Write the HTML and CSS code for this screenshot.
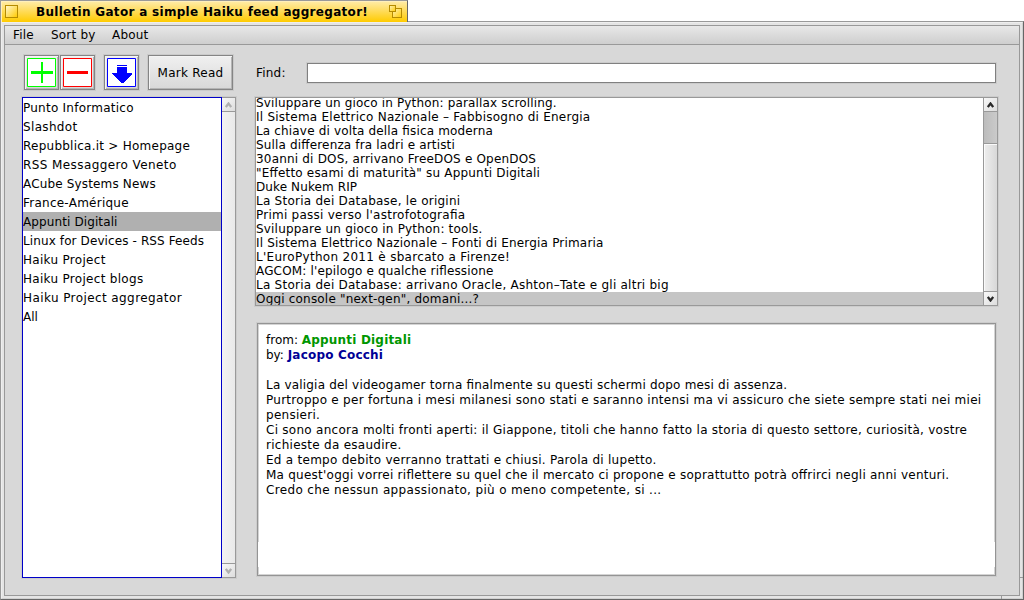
FILE: index.html
```html
<!DOCTYPE html>
<html lang="it">
<head>
<meta charset="utf-8">
<title>Bulletin Gator</title>
<link rel="stylesheet" href="styles.css">
</head>
<body>
<header class="tab">
  <span class="close"></span>
  <h1 class="title">Bulletin Gator a simple Haiku feed aggregator!</h1>
  <svg class="zoom" width="13" height="13" viewBox="0 0 13 13"><defs><linearGradient id="g" x2="1" y2="1"><stop offset="0" stop-color="#fff3b8"/><stop offset="1" stop-color="#ffcb05"/></linearGradient></defs><rect x="3.5" y="3.5" width="9" height="9" fill="url(#g)" stroke="#b58b00"/><rect x=".5" y=".5" width="6" height="6" fill="url(#g)" stroke="#b58b00"/></svg>
</header>
<div class="frame">
  <div class="window">
    <nav class="menu"><span class="m-file">File</span><span class="m-sort">Sort by</span><span>About</span></nav>
    <main class="content">
      <section class="left">
        <div class="toolbar">
          <button class="btn"><svg width="29" height="29" viewBox="0 0 29 29"><path fill="#fff" stroke="#0f0" d="M.5.5h28v28H.5z"/><path fill="#0f0" d="M4 13h22v3H4zM14 4h2v21h-2z"/></svg></button>
          <button class="btn minus"><svg width="29" height="29" viewBox="0 0 29 29"><path fill="#fff" stroke="#f00" d="M.5.5h28v28H.5z"/><path fill="#f00" d="M4 13h21v3H4z"/></svg></button>
          <button class="btn down"><svg width="29" height="29" viewBox="0 0 29 29"><path fill="#fff" stroke="#00f" d="M.5.5h28v28H.5z"/><path fill="#00f" shape-rendering="crispEdges" d="M10 7h10v1H10zM10 9h10v6h5v1l-9 9h-2l-9-9v-1h5z"/></svg></button>
          <button class="btn mark">Mark Read</button>
        </div>
        <div class="feedbox">
          <ul class="feeds">
            <li class="w5">Punto Informatico</li><li class="w7">Slashdot</li><li class="w5">Repubblica.it &gt; Homepage</li><li class="w8">RSS Messaggero Veneto</li><li class="w3">ACube Systems News</li><li class="w5">France-Amérique</li><li class="on w2">Appunti Digitali</li><li class="w2">Linux for Devices - RSS Feeds</li><li class="w6">Haiku Project</li><li class="w6">Haiku Project blogs</li><li class="w8">Haiku Project aggregator</li><li>All</li>
          </ul>
          <div class="bar off">
            <span class="arrow up"><svg width="7" height="6" viewBox="0 0 7 6"><path d="M.8 5L3.5 1.5 6.2 5"/></svg></span>
            <span class="track"></span>
            <span class="arrow dn"><svg width="7" height="6" viewBox="0 0 7 6"><path d="M.8 1L3.5 4.5 6.2 1"/></svg></span>
          </div>
        </div>
      </section>
      <section class="right">
        <div class="find"><label for="q">Find:</label><input id="q" class="query"></div>
        <div class="itembox">
          <ul class="items">
            <li class="w3">Sviluppare un gioco in Python: parallax scrolling.</li><li class="w5">Il Sistema Elettrico Nazionale – Fabbisogno di Energia</li><li class="w3">La chiave di volta della fisica moderna</li><li class="w3">Sulla differenza fra ladri e artisti</li><li class="w4">30anni di DOS, arrivano FreeDOS e OpenDOS</li><li class="w4">"Effetto esami di maturità" su Appunti Digitali</li><li class="w2">Duke Nukem RIP</li><li class="w5">La Storia dei Database, le origini</li><li class="w5">Primi passi verso l'astrofotografia</li><li class="w4">Sviluppare un gioco in Python: tools.</li><li class="w4">Il Sistema Elettrico Nazionale – Fonti di Energia Primaria</li><li class="w6">L'EuroPython 2011 è sbarcato a Firenze!</li><li class="w3">AGCOM: l'epilogo e qualche riflessione</li><li class="w5">La Storia dei Database: arrivano Oracle, Ashton–Tate e gli altri big</li><li class="sel w4">Oggi console "next-gen", domani...?</li>
          </ul>
          <div class="bar">
            <span class="arrow up"><svg width="7" height="6" viewBox="0 0 7 6"><path d="M.8 5L3.5 1.5 6.2 5"/></svg></span>
            <span class="gap"></span>
            <span class="track thumb"></span>
            <span class="arrow dn"><svg width="7" height="6" viewBox="0 0 7 6"><path d="M.8 1L3.5 4.5 6.2 1"/></svg></span>
          </div>
        </div>
        <article class="article">
          <p>from: <b class="src w4">Appunti Digitali</b></p>
          <p>by: <b class="author w4">Jacopo Cocchi</b></p>
          <p class="first w4">La valigia del videogamer torna finalmente su questi schermi dopo mesi di assenza.</p>
          <p class="w55">Purtroppo e per fortuna i mesi milanesi sono stati e saranno intensi ma vi assicuro che siete sempre stati nei miei<br>pensieri.</p>
          <p class="w55">Ci sono ancora molti fronti aperti: il Giappone, titoli che hanno fatto la storia di questo settore, curiosità, vostre<br>richieste da esaudire.</p>
          <p class="w55">Ed a tempo debito verranno trattati e chiusi. Parola di lupetto.</p>
          <p class="w5">Ma quest'oggi vorrei riflettere su quel che il mercato ci propone e soprattutto potrà offrirci negli anni venturi.</p>
          <p class="w7">Credo che nessun appassionato, più o meno competente, si ...</p>
        </article>
      </section>
    </main>
  </div>
</div>
</body>
</html>
```
FILE: styles.css
```css
* { box-sizing: border-box; margin: 0; padding: 0; }
body { width: 1024px; height: 600px; background: #fff; overflow: hidden; display: flex; flex-direction: column; font: 12px/14px "DejaVu Sans", sans-serif; color: #000; font-feature-settings: "liga" 1; }
ul { list-style: none; }
svg { display: block; }
/* letter-spacing steps */
.w2 { letter-spacing: .11px; }
.w3 { letter-spacing: .16px; }
.w4 { letter-spacing: .19px; }
.w5 { letter-spacing: .245px; }
.w55 { letter-spacing: .27px; }
.w6 { letter-spacing: .3px; }
.w7 { letter-spacing: .34px; }
.w8 { letter-spacing: .41px; }
.tab { width: 408px; height: 22px; flex: none; display: flex; align-items: center; border: 1px solid #999; border-right-color: #666; border-bottom: 0; background: linear-gradient(#ffecaa, #ffe070 35%, #ffcb00); box-shadow: inset 1px 1px #ffefbb; padding: 0 5px 0 4px; }
.close { width: 13px; height: 13px; border: 1px solid #b58b00; background: linear-gradient(135deg, #fff6cc, #ffcb05); }
.title { flex: 1; padding-left: 18px; font-size: 12px; line-height: 14px; white-space: nowrap; letter-spacing: .3px; }
.frame { height: 579px; margin-top: -1px; flex: none; border: 1px solid #999; border-right-color: #666; border-bottom-color: #666; background: #e4e4e4; padding: 3px; position: relative; z-index: -1; }
.frame::before { content: ""; position: absolute; inset: 0; border: 1px solid #eee; border-right-color: #d0d0d0; border-bottom-color: #d0d0d0; }
.frame::after { content: ""; position: absolute; right: 0; bottom: 0; width: 22px; height: 22px; background: linear-gradient(#999, #999) right top / 3px 1px no-repeat, linear-gradient(#999, #999) left bottom / 1px 3px no-repeat; }
.window { height: 571px; border: 1px solid #999; background: #d8d8d8; }
.menu { height: 19px; display: flex; padding: 2px 0 0 8px; background: linear-gradient(#e8e8e8, #cecece); border-bottom: 1px solid #999; letter-spacing: .2px; }
.m-file { width: 38px; }
.m-sort { width: 61px; }
.content { display: flex; padding: 10px 0 0 17px; }
.left { width: 232px; }
.right { width: 744px; }
.toolbar { height: 42px; display: flex; padding-left: 2px; }
.btn { width: 35px; height: 35px; display: grid; place-items: center; border: 1px solid #858585; background: linear-gradient(#f0f0f0, #d8d8d8); box-shadow: 0 0 0 1px #cacaca, inset 1px 1px #f4f4f4, inset -1px -1px #b4b4b4; font: inherit; color: inherit; }
.minus { margin-left: 1px; }
.down { margin-left: 9px; }
.mark { width: 85px; margin-left: 9px; letter-spacing: .25px; }
.feedbox { width: 214px; height: 481px; display: flex; box-shadow: 0 0 0 1px #ccc; }
.feeds { width: 200px; background: #fff; border: 1px solid #0000c8; overflow: hidden; }
.feeds li { height: 19px; line-height: 17px; padding-top: 2px; white-space: nowrap; }
.on { background: #b0b0b0; }
.bar { width: 14px; display: flex; flex-direction: column; border: 1px solid #999; border-left: 0; }
.items + .bar { width: 15px; border-left: 1px solid #999; }
.off { background: #eee; }
.arrow { height: 13px; display: grid; place-items: center; background: linear-gradient(135deg, #f8f8f8, #ddd); }
.arrow path { fill: none; stroke: #282828; stroke-width: 2.3; }
.off .arrow path { stroke: #b0b0b0; }
.track { flex: 1; border: solid #999; border-width: 1px 0; background: linear-gradient(90deg, #f2f2f2, #e9e9e9); }
.thumb { background: linear-gradient(90deg, #eee, #d8d8d8); box-shadow: inset 1px 1px #fafafa; }
.gap { height: 32px; border-top: 1px solid #999; background: linear-gradient(90deg, #bcbcbc, #cacaca); }
.find { height: 42px; display: flex; padding: 8px 0 0 2px; align-items: flex-start; letter-spacing: .2px; }
.find label { width: 51px; padding-top: 3px; }
.query { width: 689px; height: 20px; background: #fff; border: 1px solid #808080; box-shadow: 0 0 0 1px #cbcbcb; }
.itembox { width: 743px; height: 209px; margin-left: 1px; display: flex; border-left: 1px solid #999; box-shadow: 0 0 0 1px #ccc; }
.items { flex: 1; height: 209px; background: #fff; border: solid #999; border-width: 1px 0; overflow: hidden; }
.items li { height: 14px; white-space: nowrap; }
.items li:first-child { margin-top: -2px; }
.sel { background: #c5c5c5; }
.article { position: relative; width: 739px; height: 253px; margin: 17px 0 0 3px; padding: 9px 8px; border: 1px solid #949494; background: #fff; box-shadow: 0 0 0 1px #ccc, inset 0 0 0 1px #d4d4d4; line-height: 15px; white-space: nowrap; }
.article::after { content: ""; position: absolute; left: 0; right: 0; top: 218px; height: 25px; border: solid #fff; border-width: 0 1px; }
.first { margin-top: 15px; }
.src { color: #009600; }
.author { color: #000096; }
```
